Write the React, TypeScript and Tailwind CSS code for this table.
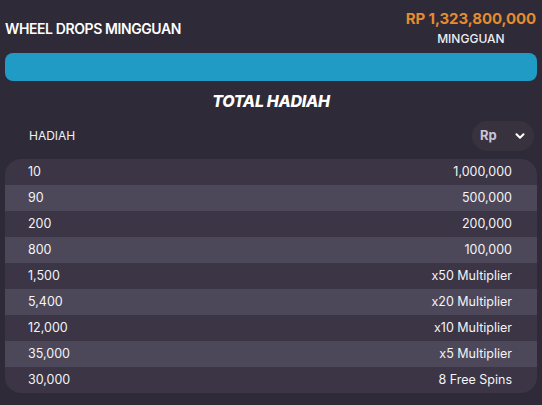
import { ChevronDown } from "lucide-react";

type Prize = {
  count: string;
  reward: string;
};

const prizes: Prize[] = [
  { count: "10", reward: "1,000,000" },
  { count: "90", reward: "500,000" },
  { count: "200", reward: "200,000" },
  { count: "800", reward: "100,000" },
  { count: "1,500", reward: "x50 Multiplier" },
  { count: "5,400", reward: "x20 Multiplier" },
  { count: "12,000", reward: "x10 Multiplier" },
  { count: "35,000", reward: "x5 Multiplier" },
  { count: "30,000", reward: "8 Free Spins" },
];

export default function App() {
  return (
    <div
      className="min-h-screen w-full bg-[#2f2a37] px-[5px] pt-[8px] text-white"
      style={{ fontFamily: "Inter, 'Noto Sans', sans-serif" }}
    >
      {/* header */}
      <div className="flex items-center justify-between">
        <h1 className="text-[14px] font-semibold tracking-[-0.4px]">WHEEL DROPS MINGGUAN</h1>
        <div className="flex flex-col items-center pr-px">
          <span className="text-[15px] leading-[22px] font-bold tracking-[-0.1px] text-[#e48c2f]">RP 1,323,800,000</span>
          <span className="text-[12px] leading-[18px] font-medium text-[#eeeef2]">MINGGUAN</span>
        </div>
      </div>

      <div className="mt-[5px] h-[28px] w-full rounded-[8px] bg-[#1f9bc5]" />

      <h2 className="mt-[8px] text-center text-[16px] leading-[24px] font-extrabold italic tracking-[-0.3px]">
        TOTAL HADIAH
      </h2>

      <div className="mt-[8px] flex items-center justify-between pl-[24px]">
        <span className="text-[12px] text-[#f1f0f4]">HADIAH</span>
        <button className="mr-[3px] flex h-[30px] w-[62px] items-center justify-between rounded-full bg-[#38323f] pl-[8px] pr-[7px]">
          <span className="text-[13px] font-bold text-[#c9c4d8]">Rp</span>
          <ChevronDown size={14} strokeWidth={3.5} className="text-white" />
        </button>
      </div>

      <div className="mt-[8px] overflow-hidden rounded-[16px]">
        {prizes.map((p, i) => (
          <div
            key={p.count}
            className={`flex h-[26px] items-center justify-between pl-[23px] pr-[25px] text-[12.5px] text-[#f4f3f6] ${
              i % 2 === 0 ? "bg-[#3b3545]" : "bg-[#4d4859]"
            }`}
          >
            <span>{p.count}</span>
            <span>{p.reward}</span>
          </div>
        ))}
      </div>
    </div>
  );
}
